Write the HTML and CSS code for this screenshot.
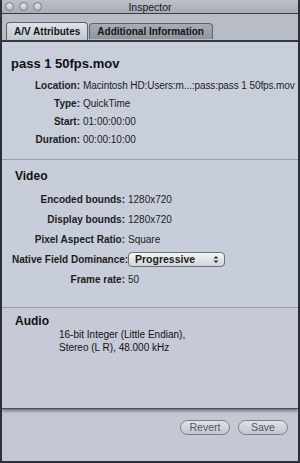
FILE: index.html
```html
<!DOCTYPE html>
<html>
<head>
<meta charset="utf-8">
<link rel="stylesheet" href="styles.css">
</head>
<body>
<div class="window">
  <div class="titlebar">
    <div class="lights"><span class="light"></span><span class="light"></span><span class="light"></span></div>
    <div class="title">Inspector</div>
  </div>
  <div class="tabbar">
    <div class="tab active">A/V Attributes</div>
    <div class="tab">Additional Information</div>
  </div>
  <div class="content">
    <div class="section general">
      <div class="filename">pass 1 50fps.mov</div>
      <div class="rows rows-general">
        <div class="label">Location:</div><div class="value loc">Macintosh HD:Users:m...:pass:pass 1 50fps.mov</div>
        <div class="label">Type:</div><div class="value">QuickTime</div>
        <div class="label">Start:</div><div class="value">01:00:00:00</div>
        <div class="label">Duration:</div><div class="value">00:00:10:00</div>
      </div>
    </div>
    <div class="section video">
      <div class="heading">Video</div>
      <div class="rows rows-video">
        <div class="label">Encoded bounds:</div><div class="value">1280x720</div>
        <div class="label">Display bounds:</div><div class="value">1280x720</div>
        <div class="label">Pixel Aspect Ratio:</div><div class="value">Square</div>
        <div class="label">Native Field Dominance:</div>
        <div class="value"><div class="popup"><span>Progressive</span><svg class="arrows" width="6" height="9" viewBox="0 0 6 9"><path d="M0.5 3.5 L3 1 L5.5 3.5 Z M0.5 5.5 L3 8 L5.5 5.5 Z" fill="#2a2d33"/></svg></div></div>
        <div class="label">Frame rate:</div><div class="value">50</div>
      </div>
    </div>
    <div class="section audio">
      <div class="heading">Audio</div>
      <div class="audio-lines">
        <div>16-bit Integer (Little Endian),</div>
        <div>Stereo (L R), 48.000 kHz</div>
      </div>
    </div>
  </div>
  <div class="footer">
    <div class="btn">Revert</div>
    <div class="btn">Save</div>
  </div>
</div>
</body>
</html>
```

FILE: styles.css
```css
* { box-sizing: border-box; }
html, body { margin: 0; padding: 0; }
body {
  width: 300px;
  height: 463px;
  overflow: hidden;
  font-family: "Liberation Sans", Arial, sans-serif;
  color: #111;
}
.window {
  width: 300px;
  height: 463px;
  display: flex;
  flex-direction: column;
  background: #c6cbd6;
  border-left: 2px solid #2c313b;
  border-right: 2px solid #2c313b;
  border-bottom: 2px solid #2c313b;
}
.titlebar {
  height: 14px;
  flex: none;
  display: flex;
  align-items: center;
  position: relative;
  background: linear-gradient(#bcc0c8, #a8acb4);
  border-bottom: 1px solid #3a3e47;
}
.lights { display: flex; gap: 5px; padding-left: 3px; }
.light {
  width: 9px; height: 9px;
  border-radius: 50%;
  border: 1px solid #7d818a;
  background: radial-gradient(circle at 50% 35%, #e2e4e8, #aeb2ba);
}
.title {
  position: absolute;
  left: 0; right: 0; top: 0;
  text-align: center;
  font-size: 10.5px;
  line-height: 14px;
  color: #1a1a1a;
}
.tabbar {
  height: 28px;
  flex: none;
  display: flex;
  align-items: flex-end;
  padding-left: 4px;
  background: #b8bcc5;
  border-bottom: 2px solid #343842;
}
.tab {
  padding: 0 8px 0 7px;
  font-size: 10px;
  font-weight: bold;
  line-height: 15px;
  color: #151515;
  border: 1px solid #5f636c;
  border-bottom: none;
  border-radius: 4px 4px 0 0;
  background: linear-gradient(#a9adb5, #8f939c);
  margin-right: 1px;
  margin-bottom: 1px;
  height: 16px;
}
.tab.active {
  height: 18px;
  line-height: 17px;
  margin-bottom: 0;
  background: linear-gradient(#dfe2e8, #c3c7cf);
  padding: 0 7px;
}
.content {
  height: 367px;
  flex: none;
  display: flex;
  flex-direction: column;
  border-bottom: 1px solid #4a4f5a;
  box-shadow: 0 2px 3px rgba(40,45,55,0.55);
  position: relative;
}
.section { border-bottom: 1px solid #9aa0ab; }
.general { height: 118px; padding: 14px 0 0 9px; background: #c9cedb; }
.video { height: 148px; padding: 9px 0 0 13px; background: #c8cdda; }
.audio { flex: 1; border-bottom: none; padding: 6px 0 0 13px; background: #c5cad6; }
.filename { font-size: 13px; font-weight: bold; line-height: 16px; }
.heading { font-size: 12px; font-weight: bold; line-height: 14px; }
.rows { display: grid; column-gap: 3px; font-size: 10px; }
.rows-general { grid-template-columns: 69px auto; margin-top: 4px; grid-auto-rows: 18px; align-items: center; }
.rows-video { grid-template-columns: 113px auto; margin-top: 6px; grid-auto-rows: 20px; align-items: center; margin-left: -3px; }
.label { font-weight: bold; text-align: right; white-space: nowrap; color: #1c1c1c; }
.value { white-space: nowrap; color: #1c1c1c; }
.loc { letter-spacing: -0.1px; }
.popup {
  width: 97px;
  height: 15px;
  display: flex;
  align-items: center;
  justify-content: space-between;
  padding: 0 5px 0 6px;
  border: 1px solid #6d717a;
  border-radius: 4px;
  background: linear-gradient(#f4f5f7, #d2d5db);
  font-weight: bold;
  font-size: 10.5px;
}
.audio-lines { padding-left: 44px; font-size: 10px; line-height: 13px; margin-top: 0px; }
.footer {
  flex: 1;
  display: flex;
  justify-content: flex-end;
  align-items: flex-start;
  gap: 8px;
  padding: 11px 10px 0 0;
  background: #c4c8d3;
}
.btn {
  width: 50px;
  height: 15px;
  border: 1px solid #7a7e87;
  border-radius: 8px;
  background: linear-gradient(#dfe1e6, #c3c6ce);
  font-size: 10.5px;
  line-height: 13px;
  text-align: center;
  color: #54585f;
}
```
